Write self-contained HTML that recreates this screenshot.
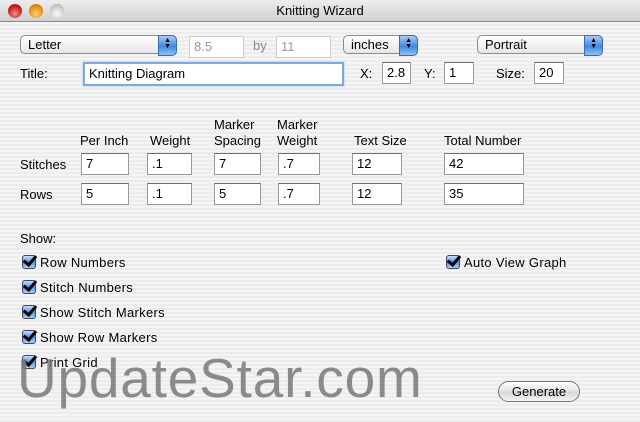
<!DOCTYPE html><html><head><style>
*{margin:0;padding:0;box-sizing:border-box}
body{width:640px;height:422px;overflow:hidden;font-family:"Liberation Sans","DejaVu Sans",sans-serif;font-size:13px;color:#000;position:relative;
background:repeating-linear-gradient(#ececec 0,#ececec 2px,#f4f4f4 2px,#f4f4f4 4px)}
.a{position:absolute;white-space:nowrap}
.tb{position:absolute;left:0;top:0;width:640px;height:22px;background:linear-gradient(#ededed,#d0d0d0);border-bottom:1px solid #8a8a8a;text-align:center;line-height:22px;font-size:13px}
.l{position:absolute;top:4px;width:14px;height:14px;border-radius:50%}
.in{position:absolute;background:#fff;border:1px solid #9a9a9a;border-top-color:#6e6e6e;height:22px;padding-left:4px;line-height:20px;font-size:13px}
.pop{position:absolute;height:19px;border:1px solid #8c8c8c;border-radius:5px;background:linear-gradient(#fff,#e6e6e6);padding-left:7px;line-height:17px;font-size:13px}
.pop::after{content:"";position:absolute;right:-1px;top:-1px;width:17px;height:19px;border-radius:0 5px 5px 0;background:linear-gradient(#a9cdf5,#3f88e0 55%,#8ec1f5);border:1px solid #3a6bb0}
.pop i{position:absolute;right:5px;top:2px;z-index:2;font-style:normal;font-size:7px;line-height:6px;color:#000}
.cb{position:absolute;width:14px;height:14px;border:1px solid #446;border-radius:3px;background:linear-gradient(#c5e0fb,#4f94e2 50%,#a4d0fa)}
.cb::after{content:"";position:absolute;left:3px;top:-3px;width:5px;height:10px;border:solid #000;border-width:0 3px 3px 0;transform:rotate(40deg)}
</style></head><body>
<div class="tb">Knitting Wizard</div>
<div class="l" style="left:8px;background:radial-gradient(circle at 50% 70%,#f58a84,#c4221d 60%,#8a1512)"></div>
<div class="l" style="left:29px;background:radial-gradient(circle at 50% 70%,#fbd27a,#e28f12 60%,#a8620a)"></div>
<div class="l" style="left:50px;background:radial-gradient(circle at 50% 70%,#fafafa,#cdcdcd 60%,#9a9a9a)"></div>

<div class="pop" style="left:20px;top:35px;width:157px">Letter<i>▲<br>▼</i></div>
<div class="in" style="left:189px;top:36px;width:55px;color:#999;border-color:#ccc">8.5</div>
<div class="a" style="left:253px;top:38px;color:#888">by</div>
<div class="in" style="left:276px;top:36px;width:55px;color:#999;border-color:#ccc">11</div>
<div class="pop" style="left:343px;top:35px;width:75px">inches<i>▲<br>▼</i></div>
<div class="pop" style="left:477px;top:35px;width:126px">Portrait<i>▲<br>▼</i></div>

<div class="a" style="left:20px;top:66px">Title:</div>
<div class="in" style="left:83px;top:62px;width:261px;height:24px;border:2px solid #7fa8dc;box-shadow:0 0 2px #9bc0ef">Knitting Diagram</div>
<div class="a" style="left:360px;top:66px">X:</div>
<div class="in" style="left:382px;top:62px;width:29px">2.8</div>
<div class="a" style="left:424px;top:66px">Y:</div>
<div class="in" style="left:444px;top:62px;width:30px">1</div>
<div class="a" style="left:496px;top:66px">Size:</div>
<div class="in" style="left:534px;top:62px;width:30px">20</div>

<div class="a" style="left:80px;top:133px">Per Inch</div>
<div class="a" style="left:150px;top:133px">Weight</div>
<div class="a" style="left:214px;top:117px;line-height:16px">Marker<br>Spacing</div>
<div class="a" style="left:277px;top:117px;line-height:16px">Marker<br>Weight</div>
<div class="a" style="left:354px;top:133px">Text Size</div>
<div class="a" style="left:444px;top:133px">Total Number</div>

<div class="a" style="left:20px;top:157px">Stitches</div>
<div class="in" style="left:81px;top:153px;width:48px">7</div>
<div class="in" style="left:147px;top:153px;width:45px">.1</div>
<div class="in" style="left:214px;top:153px;width:47px">7</div>
<div class="in" style="left:278px;top:153px;width:42px">.7</div>
<div class="in" style="left:352px;top:153px;width:50px">12</div>
<div class="in" style="left:444px;top:153px;width:80px">42</div>

<div class="a" style="left:20px;top:187px">Rows</div>
<div class="in" style="left:81px;top:183px;width:48px">5</div>
<div class="in" style="left:147px;top:183px;width:45px">.1</div>
<div class="in" style="left:214px;top:183px;width:47px">5</div>
<div class="in" style="left:278px;top:183px;width:42px">.7</div>
<div class="in" style="left:352px;top:183px;width:50px">12</div>
<div class="in" style="left:444px;top:183px;width:80px">35</div>

<div class="a" style="left:20px;top:231px">Show:</div>
<div class="cb" style="left:22px;top:255px"></div><div class="a" style="left:40px;top:255px;letter-spacing:.3px">Row Numbers</div>
<div class="cb" style="left:22px;top:280px"></div><div class="a" style="left:40px;top:280px;letter-spacing:.3px">Stitch Numbers</div>
<div class="cb" style="left:22px;top:305px"></div><div class="a" style="left:40px;top:305px;letter-spacing:.3px">Show Stitch Markers</div>
<div class="cb" style="left:22px;top:330px"></div><div class="a" style="left:40px;top:330px;letter-spacing:.3px">Show Row Markers</div>
<div class="cb" style="left:22px;top:355px"></div><div class="a" style="left:40px;top:355px;letter-spacing:.3px">Print Grid</div>
<div class="cb" style="left:446px;top:255px"></div><div class="a" style="left:464px;top:255px;letter-spacing:.3px">Auto View Graph</div>

<div class="a" style="left:498px;top:381px;width:82px;height:21px;border:1px solid #777;border-radius:11px;background:linear-gradient(#fff,#e2e2e2 50%,#d6d6d6 51%,#f4f4f4);text-align:center;line-height:19px">Generate</div>

<div class="a" style="left:17px;top:346px;font-size:55px;color:rgba(120,120,120,.85);letter-spacing:.8px">UpdateStar.com</div>
</body></html>
